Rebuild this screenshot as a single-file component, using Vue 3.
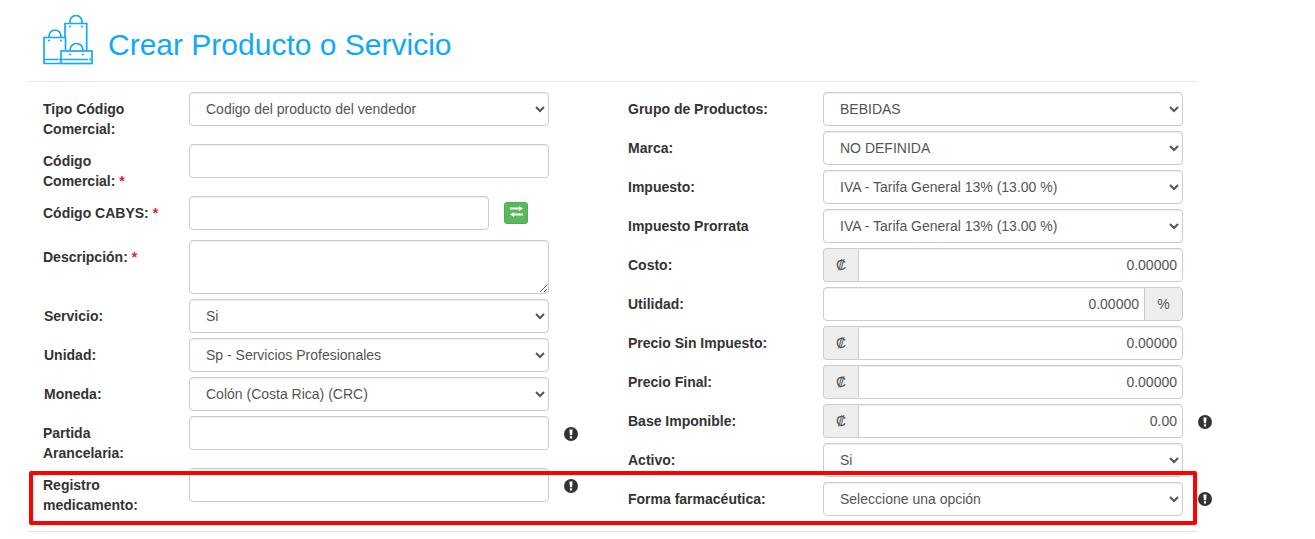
<script setup>
const left = [
  { label: 'Tipo Código Comercial:', type: 'select', value: 'Codigo del producto del vendedor' },
  { label: 'Código Comercial:', req: true, type: 'input' },
  { label: 'Código CABYS:', req: true, type: 'input', swap: true },
  { label: 'Descripción:', req: true, type: 'textarea' },
  { label: 'Servicio:', type: 'select', value: 'Si', inset: true },
  { label: 'Unidad:', type: 'select', value: 'Sp - Servicios Profesionales', inset: true },
  { label: 'Moneda:', type: 'select', value: 'Colón (Costa Rica) (CRC)', inset: true },
  { label: 'Partida Arancelaria:', type: 'input', info: 'info' },
  { label: 'Registro medicamento:', type: 'input', info: 'info' }
]
const right = [
  { label: 'Grupo de Productos:', type: 'select', value: 'BEBIDAS' },
  { label: 'Marca:', type: 'select', value: 'NO DEFINIDA' },
  { label: 'Impuesto:', type: 'select', value: 'IVA - Tarifa General 13% (13.00 %)' },
  { label: 'Impuesto Prorrata', type: 'select', value: 'IVA - Tarifa General 13% (13.00 %)' },
  { label: 'Costo:', type: 'money', value: '0.00000' },
  { label: 'Utilidad:', type: 'percent', value: '0.00000' },
  { label: 'Precio Sin Impuesto:', type: 'money', value: '0.00000' },
  { label: 'Precio Final:', type: 'money', value: '0.00000' },
  { label: 'Base Imponible:', type: 'money', value: '0.00', info: 'info' },
  { label: 'Activo:', type: 'select', value: 'Si' },
  { label: 'Forma farmacéutica:', type: 'select', value: 'Seleccione una opción', info: 'info info-high' }
]
const columns = [
  { name: 'col-left', rows: left },
  { name: 'col-right', rows: right }
]
</script>

<template>
  <div class="page">
    <header class="head">
      <svg class="logo" viewBox="0 0 50 50" fill="none" stroke="#12a8fb" stroke-width="1.7">
        <path d="M22 23V8.500H43.700V35.500" />
        <path d="M27 8.500V6.500a6 6 0 0 1 12 0v2" />
        <path d="M17.500 48.500H1V22.500H22.500V35" />
        <path d="M6 22.500V21a6 6 0 0 1 12 0v1.500" />
        <rect x="18" y="36" width="31" height="12.500" />
        <path d="M27 36v-1a6.500 6.500 0 0 1 13 0v1" />
        <path d="M1 44.500H15M18 44.500H45" />
        <path d="M26 39.500h2M39 39.500h2M26 11.500h2M38 11.500h2M5 25.500h2M17 25.500h2M15.500 44.500h2M46 44.500h2" />
      </svg>
      <h1 class="title">Crear Producto o Servicio</h1>
    </header>

    <form class="form">
      <div v-for="col in columns" :key="col.name" :class="col.name">
        <div v-for="row in col.rows" :key="row.label" class="row">
          <label :class="['lbl', { inset: row.inset }]">{{ row.label }}<span v-if="row.req" class="req"> *</span></label>

          <select v-if="row.type === 'select'" class="ctl">
            <option>{{ row.value }}</option>
          </select>
          <textarea v-else-if="row.type === 'textarea'" class="ctl area"></textarea>
          <div v-else-if="row.type === 'money'" class="group">
            <span class="addon addon-l">₡</span>
            <input class="ctl num num-r" type="text" :value="row.value" />
          </div>
          <div v-else-if="row.type === 'percent'" class="group">
            <input class="ctl num num-l" type="text" :value="row.value" />
            <span class="addon addon-r">%</span>
          </div>
          <input v-else :class="['ctl', { short: row.swap }]" type="text" />

          <button v-if="row.swap" class="swap" type="button" aria-label="Buscar">
            <svg class="swap-icon" viewBox="0 0 13 11" width="13" height="11" fill="#fff">
              <path d="M0 1.500h9V0l4 2.500-4 2.500V3.500H0z" />
              <path d="M13 7.500H4V6l-4 2.500 4 2.500V9.500h9z" />
            </svg>
          </button>

          <svg v-if="row.info" :class="row.info" viewBox="0 0 14 14" width="14" height="14">
            <circle cx="7" cy="7" r="7" fill="#333" />
            <path d="M5.400 2.400h3.200L8.100 8.300H5.900z" fill="#fff" />
            <rect x="5.900" y="9.300" width="2.200" height="2.200" fill="#fff" />
          </svg>
        </div>
      </div>
    </form>
    <hr class="rule" />
    <div class="mark"></div>
  </div>
</template>

<style scoped>
.page {
  position: relative;
  width: 1315px;
  padding-left: 28px;
  box-sizing: border-box;
  font-family: "Liberation Sans", Arial, sans-serif;
  font-size: 14px;
  line-height: 20px;
  color: #333;
}
.head {
  display: flex;
  align-items: flex-start;
  width: 1169px;
  height: 82px;
  box-sizing: border-box;
  padding: 15px 0 0 15px;
  border-bottom: 1px solid #e5e5e5;
}
.logo {
  width: 50px;
  height: 50px;
  flex: none;
}
.title {
  margin: 13px 0 0 15px;
  font-size: 30px;
  line-height: 33px;
  font-weight: 400;
  color: #0ea8fd;
}
.form {
  display: flex;
  padding: 10px 0 0 15px;
}
.col-left {
  width: 585px;
  flex: none;
}
.row {
  display: flex;
  align-items: flex-start;
  margin-bottom: 5px;
}
.lbl {
  width: 146px;
  flex: none;
  box-sizing: border-box;
  padding: 7px 25px 0 0;
  font-weight: 700;
}
.inset {
  padding-left: 1px;
}
.col-right .lbl {
  width: 195px;
}
.req {
  color: #d9232e;
}
.ctl {
  display: block;
  width: 360px;
  height: 34px;
  box-sizing: border-box;
  margin: 0;
  padding: 6px 12px;
  border: 1px solid #ccc;
  border-radius: 4px;
  background: #fff;
  box-shadow: inset 0 1px 1px rgba(0, 0, 0, .075);
  font: inherit;
  color: #555;
}
.short {
  width: 300px;
  margin-bottom: 5px;
}
.area {
  height: 54px;
}
.group {
  display: flex;
  width: 360px;
}
.num {
  flex: 1;
  width: auto;
  min-width: 0;
  padding: 6px 5px;
  text-align: right;
}
.num-r {
  border-radius: 0 4px 4px 0;
}
.num-l {
  border-radius: 4px 0 0 4px;
}
.addon {
  box-sizing: border-box;
  height: 34px;
  padding: 6px 0;
  border: 1px solid #ccc;
  background: #eee;
  color: #555;
  text-align: center;
}
.addon-l {
  width: 35px;
  border-right: 0;
  border-radius: 4px 0 0 4px;
}
.addon-r {
  width: 39px;
  margin-left: -1px;
  border-radius: 0 4px 4px 0;
}
.swap {
  display: flex;
  align-items: center;
  justify-content: center;
  width: 24px;
  height: 22px;
  margin: 6px 0 0 15px;
  padding: 0;
  border: 1px solid #4cae4c;
  border-radius: 3px;
  background: #5cb85c;
}
.swap-icon {
  margin-bottom: 3px;
}
.info {
  flex: none;
  margin: 11px 0 0 15px;
}
.info-high {
  margin-top: 10px;
}
.rule {
  width: 1169px;
  height: 0;
  margin: 10px 0 0;
  border: 0;
  border-top: 1px solid #e5e5e5;
}
.mark {
  position: absolute;
  left: 29px;
  top: 471px;
  width: 1168px;
  height: 54px;
  box-sizing: border-box;
  border: 4px solid #f00;
  border-radius: 2px;
}
</style>
